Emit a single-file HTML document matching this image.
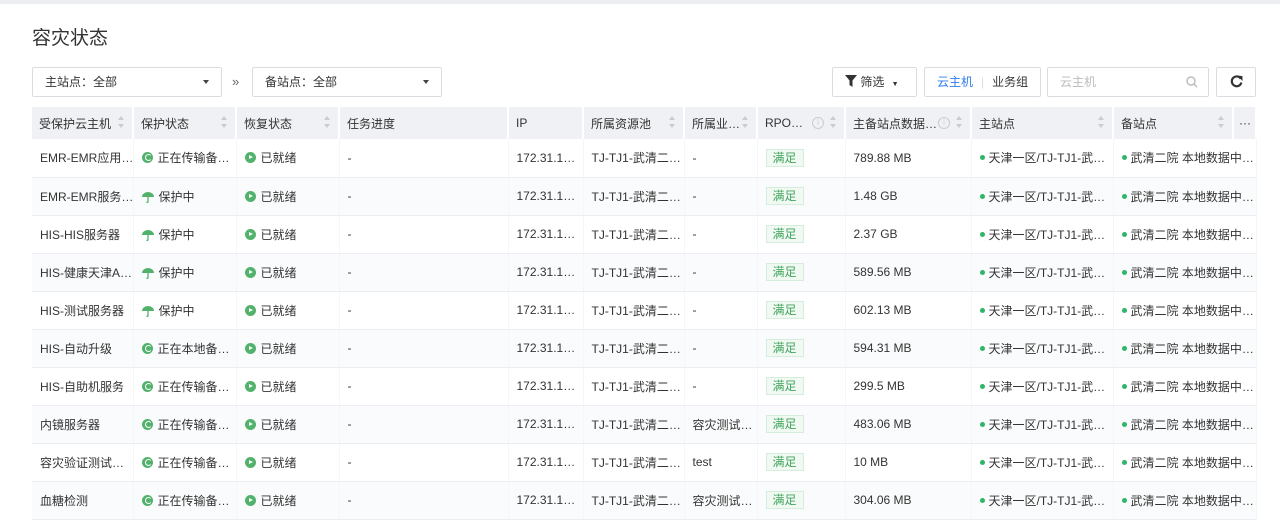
<!DOCTYPE html>
<html><head><meta charset="utf-8"><style>
*{box-sizing:border-box;margin:0;padding:0}
body{width:1280px;height:525px;overflow:hidden;background:#fff;font-family:"Liberation Sans","Noto Sans CJK SC",sans-serif;font-size:12px;color:#333;position:relative}
.top{position:absolute;left:0;top:0;width:1280px;height:4px;background:#eceef2}
h1{position:absolute;left:32px;top:23px;font-size:19px;font-weight:normal;color:#333}
.sel{position:absolute;top:67px;height:30px;border:1px solid #d9dce1;border-radius:2px;padding:0 12px;line-height:28px;font-size:12px}
.sel:after{content:"";position:absolute;right:12px;top:12px;border:3px solid transparent;border-top:4px solid #444;border-bottom:0}
.btn{position:absolute;top:67px;height:30px;border:1px solid #d9dce1;border-radius:2px;line-height:28px;font-size:12px}
table{position:absolute;left:32px;top:107px;border-collapse:collapse;table-layout:fixed;width:1224px}
th{height:32px;background:#eff1f4;text-align:left;font-weight:normal;padding:0 7px;border-right:2px solid #fff;position:relative;white-space:nowrap;overflow:hidden}
th .s{position:absolute;right:8px;top:9px;width:6px;height:14px}
th .s:before{content:"";position:absolute;left:0;top:0;border:3px solid transparent;border-bottom:4px solid #c9ccd2;border-top:0}
th .s:after{content:"";position:absolute;left:0;top:8px;border:3px solid transparent;border-top:4px solid #c9ccd2;border-bottom:0}
th .i{position:absolute;right:20px;top:10px;width:12px;height:12px;border:1px solid #c9ccd2;border-radius:50%;font-size:8px;line-height:10px;text-align:center;color:#c9ccd2}
td{height:38px;padding:0 8px;border-bottom:1px solid #eceef2;border-right:1px solid #f5f6f8;white-space:nowrap;overflow:hidden}
tr:nth-child(even) td{background:#fafbfc}
.g{display:inline-block;width:11px;height:11px;border-radius:50%;background:#52b26b;vertical-align:-1px;margin-right:5px;position:relative}
.g.c:after{content:"";position:absolute;left:3px;top:2px;width:5px;height:5px;border:1.5px solid #fff;border-right-color:transparent;border-radius:50%}
.g.p:after{content:"";position:absolute;left:4px;top:3px;border:2.5px solid transparent;border-left:4px solid #fff;border-right:0}
.u{display:inline-block;width:12px;height:12px;vertical-align:-2px;margin-right:5px}
.tag{display:inline-block;border:1px solid #d4eedb;background:#f0faf3;color:#42a35c;padding:0 6px;line-height:16px}
.d{display:inline-block;width:5px;height:5px;border-radius:50%;background:#2fb568;vertical-align:2px;margin-right:4px}
</style></head><body>
<div class="top"></div>
<h1>容灾状态</h1>
<div class="sel" style="left:32px;width:190px">主站点：全部</div>
<div style="position:absolute;left:232px;top:74px;font-size:13px;color:#666">»</div>
<div class="sel" style="left:252px;width:190px">备站点：全部</div>
<div class="btn" style="left:832px;width:85px;padding-left:12px"><svg width="12" height="12" viewBox="0 0 12 12" style="vertical-align:-1px"><path d="M0 0H12L7.5 5.5V12L4.5 10V5.5Z" fill="#333"/></svg> 筛选 <span style="font-size:7px;margin-left:4px">▼</span></div>
<div class="btn" style="left:924px;width:117px;padding-left:12px"><span style="color:#2d7cf0">云主机</span><span style="color:#ddd;margin:0 8px">|</span>业务组</div>
<div class="btn" style="left:1047px;width:162px;padding-left:12px;color:#bbb">云主机<svg width="12" height="12" viewBox="0 0 12 12" style="position:absolute;right:10px;top:8px"><circle cx="5" cy="5" r="4" stroke="#bbb" stroke-width="1.4" fill="none"/><path d="M8 8L11 11" stroke="#bbb" stroke-width="1.4"/></svg></div>
<div class="btn" style="left:1216px;width:40px;text-align:center"><svg width="13" height="13" viewBox="0 0 12 12" style="vertical-align:-2px"><path d="M10 3.5A4.5 4.5 0 1 0 10.5 7" stroke="#333" stroke-width="2" fill="none"/><path d="M7 0.5L11.5 1V5.5Z" fill="#333"/></svg></div>
<table>
<colgroup><col style="width:101px"><col style="width:103px"><col style="width:103px"><col style="width:169px"><col style="width:75px"><col style="width:101px"><col style="width:73px"><col style="width:88px"><col style="width:126px"><col style="width:142px"><col style="width:120px"><col style="width:23px"></colgroup>
<tr><th>受保护云主机<span class="s"></span></th><th>保护状态<span class="s"></span></th><th>恢复状态<span class="s"></span></th><th>任务进度</th><th>IP</th><th>所属资源池<span class="s"></span></th><th>所属业…<span class="s"></span></th><th>RPO…<span class="i">i</span><span class="s"></span></th><th>主备站点数据…<span class="i">i</span><span class="s"></span></th><th>主站点<span class="s"></span></th><th>备站点<span class="s"></span></th><th style="padding:0 5px">···</th></tr>
<tbody id="b"></tbody>
</table>
<script>
var U='<svg class="u" viewBox="0 0 12 12"><path d="M0 6A6 5 0 0 1 12 6Z" fill="#52b26b"/><path d="M6 6V10.5Q6 12 4.5 11" stroke="#52b26b" stroke-width="1.3" fill="none"/></svg>';
var C='<span class="g c"></span>',P='<span class="g p"></span>';
var r=[["EMR-EMR应用…",C+"正在传输备…","-","789.88 MB"],["EMR-EMR服务…",U+"保护中","-","1.48 GB"],["HIS-HIS服务器",U+"保护中","-","2.37 GB"],["HIS-健康天津A…",U+"保护中","-","589.56 MB"],["HIS-测试服务器",U+"保护中","-","602.13 MB"],["HIS-自动升级",C+"正在本地备…","-","594.31 MB"],["HIS-自助机服务",C+"正在传输备…","-","299.5 MB"],["内镜服务器",C+"正在传输备…","容灾测试…","483.06 MB"],["容灾验证测试…",C+"正在传输备…","test","10 MB"],["血糖检测",C+"正在传输备…","容灾测试…","304.06 MB"]];
var h='';r.forEach(function(x){h+='<tr><td>'+x[0]+'</td><td>'+x[1]+'</td><td>'+P+'已就绪</td><td>-</td><td>172.31.1…</td><td>TJ-TJ1-武清二…</td><td>'+x[2]+'</td><td><span class="tag">满足</span></td><td>'+x[3]+'</td><td><span class="d"></span>天津一区/TJ-TJ1-武…</td><td colspan="2"><span class="d"></span>武清二院 本地数据中…</td></tr>'});
document.getElementById('b').innerHTML=h;
</script>
</body></html>
